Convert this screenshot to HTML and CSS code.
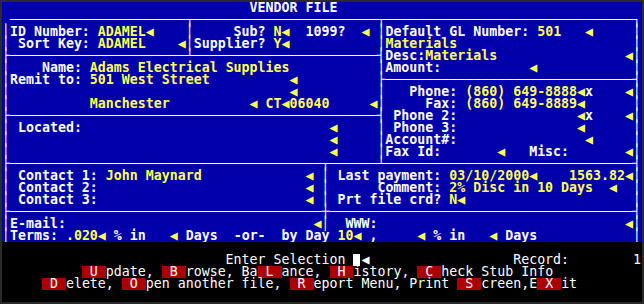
FILE: index.html
```html
<!DOCTYPE html>
<html lang="en">
<head>
    <meta charset="UTF-8">
    <title>Vendor File</title>
    <link rel="stylesheet" href="styles.css">
</head>
<body>

<div class="screen">
<pre class="panel">
                               VENDOR FILE
 ──────────────────────┬───────────────────────┬───────────────────────────────┐
│ID Number: <span class="v">ADAMEL◀</span>    │     Sub? <span class="v">N◀</span>  1099?  <span class="v">◀</span> │Default GL Number: <span class="v">501</span>   <span class="v">◀</span>     │
│ Sort Key: <span class="v">ADAMEL</span>    <span class="v">◀</span>│Supplier? <span class="v">Y◀</span>           │<span class="v">Materials</span>                      │
├──────────────────────┴───────────────────────┤Desc:<span class="v">Materials</span>                <span class="v">◀</span>│
│    Name: <span class="v">Adams Electrical Supplies</span>           │Amount:           <span class="v">◀</span>            │
│Remit to: <span class="v">501 West Street</span>          <span class="v">◀</span>          ├───────────────────────────────┤
│                                   <span class="v">◀</span>          │   Phone: <span class="v">(860) 649-8888◀</span>x    <span class="v">◀</span>│
│          <span class="v">Manchester</span>          <span class="v">◀ CT◀06040</span>     <span class="v">◀</span>│     Fax: <span class="v">(860) 649-8889◀</span>      │
├──────────────────────────────────────────────┤ Phone 2:               <span class="v">◀</span>x    <span class="v">◀</span>│
│ Located:                               <span class="v">◀</span>     │ Phone 3:               <span class="v">◀</span>      │
│                                        <span class="v">◀</span>     │Account#:                <span class="v">◀</span>     │
│                                        <span class="v">◀</span>     │Fax Id:       <span class="v">◀</span>   Misc:       <span class="v">◀</span>│
├───────────────────────────────────────┬──────┴───────────────────────────────┤
│ Contact 1: <span class="v">John Maynard</span>             <span class="v">◀</span> │ Last payment: <span class="v">03/10/2000◀</span>    <span class="v">1563.82◀</span>│
│ Contact 2:                          <span class="v">◀</span> │      Comment: <span class="v">2% Disc in 10 Days</span>  <span class="v">◀</span>  │
│ Contact 3:                          <span class="v">◀</span> │ Prt file crd? <span class="v">N◀</span>                     │
├───────────────────────────────────────┼──────────────────────────────────────┤
│E-mail:                               <span class="v">◀</span>│  WWW:                               <span class="v">◀</span>│
│Terms: <span class="v">.020◀</span> % in   <span class="v">◀</span> Days  -or-  by Day <span class="v">10◀</span> ,     <span class="v">◀</span> % in   <span class="v">◀</span> Days            │
</pre>
<pre class="menu">

                            Enter Selection <span class="cur"> </span>◀                  Record:        1
          <span class="k"> U </span>pdate, <span class="k"> B </span>rowse, Ba<span class="k"> L </span>ance, <span class="k"> H </span>istory, <span class="k"> C </span>heck Stub Info
     <span class="k"> D </span>elete, <span class="k"> O </span>pen another file, <span class="k"> R </span>eport Menu, Print <span class="k"> S </span>creen,E<span class="k"> X </span>it
</pre>
</div>

</body>
</html>
```

FILE: styles.css
```css
html, body {
    margin: 0;
    overflow: hidden;
}
body {
    padding: 2px;
    background-color: #2a2a2a;
}
.screen {
    width: 640px;
}
pre {
    margin: 0;
    font-family: "DejaVu Sans Mono", "Liberation Mono", monospace;
    font-size: 13.28px;
    line-height: 12px;
    overflow: hidden;
}
.panel {
    height: 240px;
    background-color: #0000aa;
    color: #ffffff;
    font-weight: bold;
}
.menu {
    height: 60px;
    background-color: #000000;
    color: #ffffff;
}
.v {
    color: #ffff55;
}
.k {
    display: inline-block;
    background-color: #aa0000;
    color: #ffffff;
}
.cur {
    display: inline-block;
    width: 7px;
    height: 12px;
    margin-right: 1px;
    vertical-align: top;
    background-color: #ffffff;
}
```
